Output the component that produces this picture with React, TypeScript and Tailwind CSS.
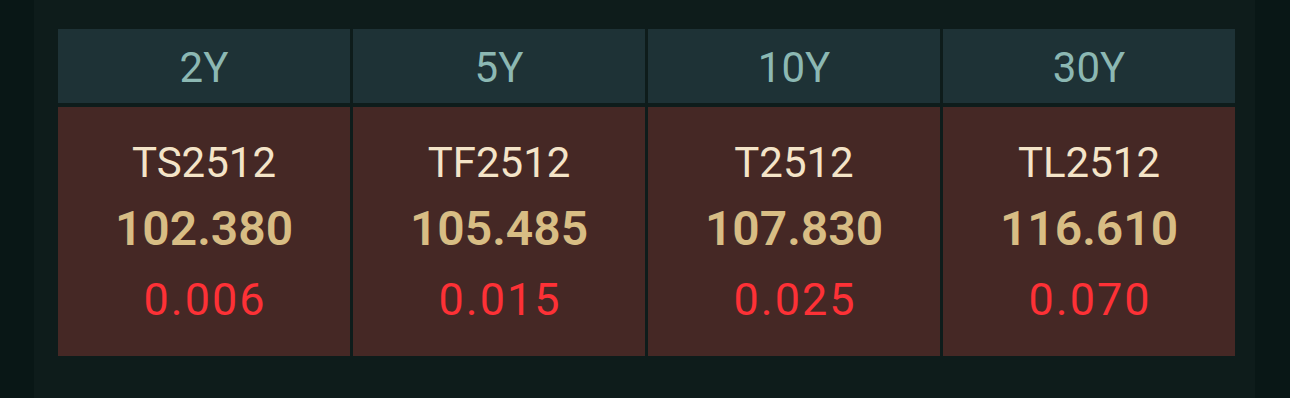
const TENORS = ["2Y", "5Y", "10Y", "30Y"];

interface Quote {
  code: string;
  price: string;
  change: string;
}

const QUOTES: Quote[] = [
  { code: "TS2512", price: "102.380", change: "0.006" },
  { code: "TF2512", price: "105.485", change: "0.015" },
  { code: "T2512", price: "107.830", change: "0.025" },
  { code: "TL2512", price: "116.610", change: "0.070" },
];

export default function App() {
  return (
    <div
      className="flex h-[398px] w-[1290px] bg-[#091716]"
      style={{ fontFamily: "Roboto, 'Liberation Sans', sans-serif" }}
    >
      <div className="ml-[34px] h-full w-[1221px] bg-[#0e1c1b] pl-6 pr-5 pt-[29px]">
        {/* tenor headers */}
        <div className="grid grid-cols-4 gap-[3px]">
          {TENORS.map((t) => (
            <div
              key={t}
              className="flex h-[74px] items-center justify-center bg-[#1e3236] pt-[3px] text-[42px] text-[#8cb8b3]"
            >
              {t}
            </div>
          ))}
        </div>

        {/* contract quotes */}
        <div className="mt-[4px] grid grid-cols-4 gap-[3px]">
          {QUOTES.map((q) => (
            <div
              key={q.code}
              className="flex h-[249px] flex-col items-center bg-[#452825] pt-[26px]"
            >
              <div className="text-[42px] leading-[60px] text-[#f4e4c8]">
                {q.code}
              </div>
              <div className="text-[48px] font-semibold leading-[71px] text-[#d8bd84]">
                {q.price}
              </div>
              <div className="pl-[2px] text-[45px] leading-[71px] tracking-[2px] text-[#fd3136]">
                {q.change}
              </div>
            </div>
          ))}
        </div>
      </div>
    </div>
  );
}
